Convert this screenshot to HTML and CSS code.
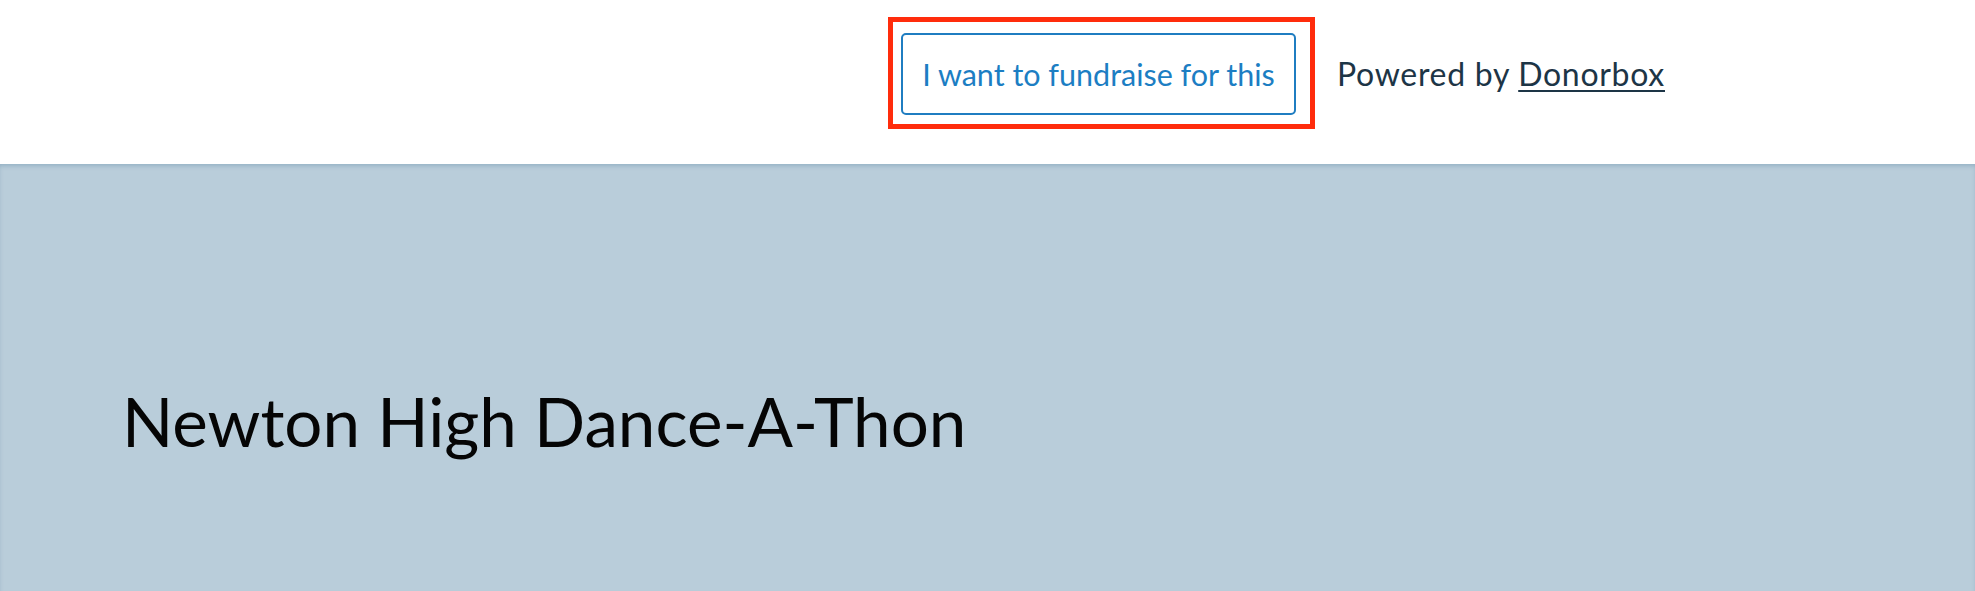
FILE: index.html
```html
<!DOCTYPE html>
<html lang="en">
<head>
<meta charset="utf-8">
<title>Newton High Dance-A-Thon</title>
<link rel="stylesheet" href="styles.css">
</head>
<body>
<header class="topbar">
  <div class="highlight">
    <a class="fund-btn" href="#">I want to fundraise for this</a>
  </div>
  <p class="powered">Powered by <a class="powered-link" href="#">Donorbox</a></p>
</header>
<section class="hero">
  <h1 class="hero-title">Newton High Dance-A-Thon</h1>
</section>
</body>
</html>
```
FILE: styles.css
```css
html, body {
  margin: 0;
  padding: 0;
}

body {
  font-family: Lato, "Noto Sans", sans-serif;
  background: #b9cdda;
  min-height: 591px;
}

.topbar {
  box-sizing: border-box;
  height: 164px;
  padding: 17px 310px 35px 0;
  background: #ffffff;
  display: flex;
  justify-content: flex-end;
  align-items: center;
  gap: 22px;
}

.highlight {
  display: flex;
  border: 5px solid #ff2c0c;
  padding: 11px 14px 9px 8px;
}

.fund-btn {
  box-sizing: border-box;
  width: 395px;
  height: 82px;
  display: flex;
  align-items: center;
  justify-content: center;
  border: 2px solid #1f7dc1;
  border-radius: 5px;
  background: #ffffff;
  color: #1c7ec3;
  font-size: 30.5px;
  text-decoration: none;
  white-space: nowrap;
}

.powered {
  margin: 0;
  color: #1d3546;
  font-size: 32px;
  letter-spacing: 0.7px;
  white-space: nowrap;
}

.powered-link {
  color: #1d3546;
  text-decoration: underline;
  text-decoration-thickness: 2px;
  text-underline-offset: 4px;
}

.hero {
  box-sizing: border-box;
  height: 427px;
  background: #b9cdda;
  box-shadow: inset 0 3px 4px -1px rgba(70, 115, 150, 0.3);
  padding: 217px 0 0 122px;
}

.hero-title {
  margin: 0;
  font-weight: 400;
  font-size: 67.3px;
  line-height: 1.2;
  color: #050505;
}
```
